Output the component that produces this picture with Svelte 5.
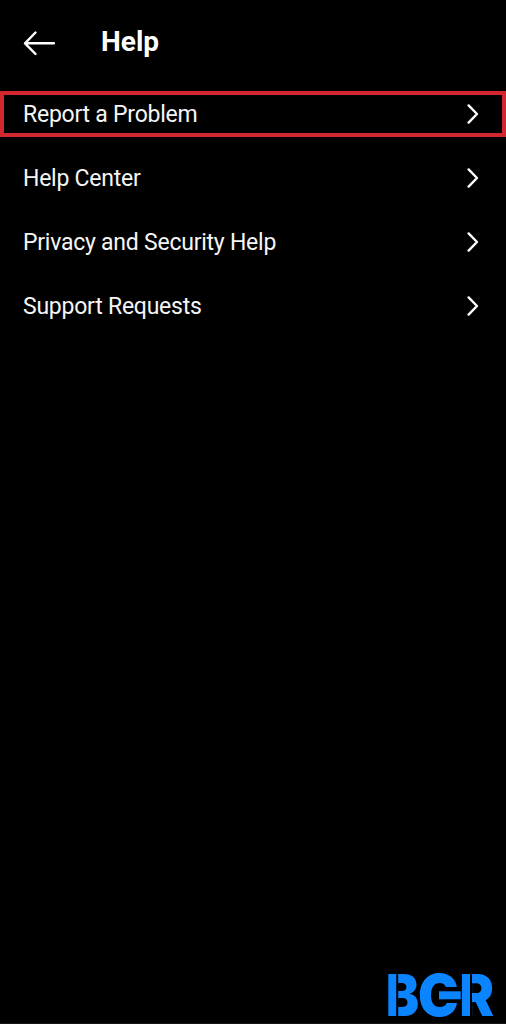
<script lang="ts">
	let items = $state([
		{ id: 'report', label: 'Report a Problem' },
		{ id: 'center', label: 'Help Center' },
		{ id: 'privacy', label: 'Privacy and Security Help' },
		{ id: 'requests', label: 'Support Requests' },
	]);
	let selectedId = $state('report');
</script>

<div class="help-screen">
	<header class="help-header">
		<button class="back-button" aria-label="Back">
			<svg width="34" height="26" viewBox="0 0 34 26" aria-hidden="true">
				<path d="M14.5 2.5 L4 13.3 L14.5 24 M4 13.3 H33" />
			</svg>
		</button>
		<h1>Help</h1>
	</header>

	<nav class="help-list">
		{#each items as item (item.id)}
			<button
				class="help-row"
				class:selected={selectedId === item.id}
				onclick={() => (selectedId = item.id)}
			>
				<span>{item.label}</span>
				<svg width="14" height="22" viewBox="0 0 14 22" aria-hidden="true">
					<path d="M2.6 2.4 L11 11 L2.6 19.6" />
				</svg>
			</button>
		{/each}
	</nav>

	<footer class="brand">
		<svg width="108" height="46" viewBox="0 0 108 46" aria-label="BGR">
			<g class="letters">
				<text x="-1" y="43.7" textLength="33" lengthAdjust="spacingAndGlyphs">B</text>
				<text x="31" y="43.7" textLength="41.5" lengthAdjust="spacingAndGlyphs">G</text>
				<text x="72.5" y="43.7" textLength="34.5" lengthAdjust="spacingAndGlyphs">R</text>
			</g>
			<!-- stencil gaps -->
			<rect class="gap" x="9.2" y="0" width="2" height="46" />
			<rect class="gap" x="83" y="0" width="2" height="46" />
			<rect class="gap" x="49" y="15" width="24.7" height="16" />
			<rect class="bar" x="52" y="19.3" width="21.7" height="8" />
		</svg>
	</footer>
</div>

<style>
	:global(body) {
		background: #000;
	}
	.help-screen {
		display: flex;
		flex-direction: column;
		height: 1024px;
		box-sizing: border-box;
		background: #000;
		color: #f5f5f5;
		font-family: Roboto, sans-serif;
		border-bottom: 1px solid #141414;
	}
	button {
		margin: 0;
		border: none;
		background: transparent;
		color: inherit;
		font: inherit;
		cursor: pointer;
	}
	.help-header {
		display: flex;
		align-items: center;
		gap: 46px;
		height: 82px;
		padding: 0 22px 0 21px;
	}
	.back-button {
		display: flex;
		padding: 4px 0 0;
	}
	h1 {
		margin: 0;
		padding-top: 2px;
		color: #fff;
		font-size: 28px;
		font-weight: 700;
		line-height: 34px;
	}
	path {
		fill: none;
		stroke: #fff;
		stroke-width: 2.4;
		stroke-linecap: round;
		stroke-linejoin: round;
	}
	.help-list {
		display: flex;
		flex-direction: column;
		gap: 18px;
		padding-top: 9px;
	}
	.help-row {
		display: flex;
		align-items: center;
		justify-content: space-between;
		height: 46px;
		box-sizing: border-box;
		padding: 0 22px 0 19px;
		border: 4px solid transparent;
		font-size: 23px;
		letter-spacing: -0.24px;
		line-height: 28px;
	}
	.help-row span {
		padding-top: 2px;
	}
	.selected {
		border-color: #d3272f;
	}
	.brand {
		display: flex;
		justify-content: flex-end;
		margin-top: auto;
		padding: 0 11px 5px 0;
	}
	.brand svg {
		overflow: visible;
	}
	.letters {
		fill: #0a84ff;
		font-family: Inter, sans-serif;
		font-size: 58px;
		font-weight: 900;
	}
	.gap {
		fill: #000;
	}
	.bar {
		fill: #0a84ff;
	}
</style>
